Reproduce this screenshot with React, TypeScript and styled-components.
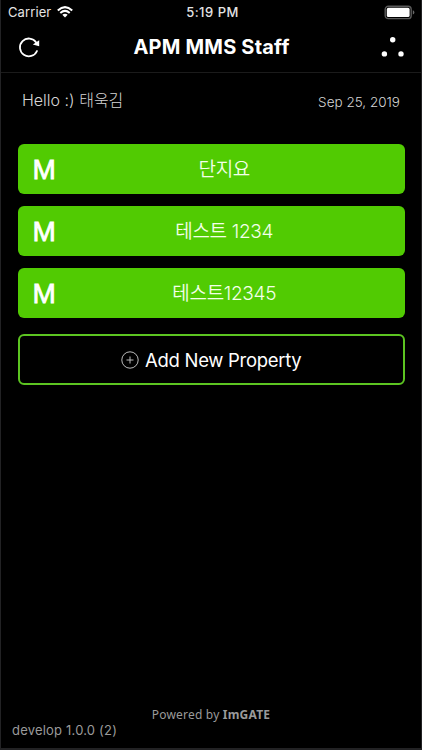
import React from "react";
import styled, { createGlobalStyle } from "styled-components";

const GlobalStyle = createGlobalStyle`
  * { box-sizing: border-box; }
  body { margin: 0; background: #000; }
`;

const Screen = styled.main`
  width: 422px;
  height: 750px;
  display: flex;
  flex-direction: column;
  background: #000;
  color: #fff;
  border: solid #222224;
  border-width: 0 1px 2px;
  font-family: Inter, "Noto Sans CJK KR", sans-serif;
  white-space: nowrap;
  overflow: hidden;
`;

const StatusBar = styled.div`
  height: 24px;
  padding: 0 6px 0 7px;
  display: grid;
  grid-template-columns: 1fr auto 1fr;
  align-items: center;
  font-size: 13px;
  line-height: 24px;
  color: #e4e4e4;
`;

const Carrier = styled.div`
  display: flex;
  align-items: center;
  gap: 6px;
  letter-spacing: 0.1px;
`;

const Clock = styled.div`
  font-weight: 500;
  letter-spacing: 0.5px;
  padding-left: 2px;
`;

const BatterySlot = styled.div`
  display: flex;
  justify-content: flex-end;
`;

const NavBar = styled.header`
  height: 49px;
  padding: 0 16px 2px 17px;
  display: grid;
  grid-template-columns: 24px 1fr 24px;
  align-items: center;
  border-bottom: 1px solid #1b1b1b;
`;

const Title = styled.h1`
  margin: 0;
  text-align: center;
  font-size: 20px;
  line-height: 24px;
  font-weight: 700;
  letter-spacing: 0.2px;
`;

const Greeting = styled.section`
  height: 71px;
  padding: 15px 21px 0;
  display: flex;
  justify-content: space-between;
  color: #d6d6d6;
  font-weight: 300;
  line-height: 24px;
`;

const Hello = styled.span`
  font-size: 16px;
`;

const DateText = styled.span`
  font-size: 13.5px;
  padding-top: 2px;
`;

const Properties = styled.section`
  padding: 0 16px 0 16.5px;
  display: flex;
  flex-direction: column;
  gap: 11.6px;
`;

const PropertyButton = styled.button`
  height: 50.3px;
  padding: 0 16px;
  display: grid;
  grid-template-columns: 26px 1fr 0;
  align-items: center;
  border: 0;
  border-radius: 6px;
  background: #51cb02;
  color: #f3ffe9;
  font: inherit;
`;

const Mark = styled.span`
  justify-self: start;
  margin-left: -1px;
  padding-top: 2px;
  color: #fff;
  font-family: "Liberation Sans", sans-serif;
  font-size: 28px;
  line-height: 48px;
  -webkit-text-stroke: 0.8px #fff;
`;

const Name = styled.span`
  padding-top: 2px;
  text-align: center;
  font-size: 19px;
  line-height: 48px;
  font-weight: 350;
  letter-spacing: -0.3px;
`;

const AddButton = styled.button`
  height: 51px;
  margin-top: 4.7px;
  padding: 0;
  display: flex;
  align-items: center;
  justify-content: center;
  gap: 6px;
  border: 2px solid #5cc421;
  border-radius: 6px;
  background: #000;
  color: #fff;
  font: inherit;
  font-size: 18.5px;
  letter-spacing: -0.3px;
`;

const Footer = styled.footer`
  margin-top: auto;
  display: flex;
  flex-direction: column;
  color: #9a9a9a;
`;

const Powered = styled.p`
  margin: 0;
  text-align: center;
  font-family: "Noto Sans", sans-serif;
  font-size: 12px;
  line-height: 16px;
  letter-spacing: 0.2px;
`;

const Version = styled.p`
  margin: 0;
  padding: 0 0 11px 11px;
  font-size: 13px;
  line-height: 14px;
  letter-spacing: 0.2px;
`;

const WifiIcon = () => (
  <svg width="16" height="12" viewBox="0 0 16 12" fill="none" stroke="#fff" strokeWidth="2">
    <path d="M.8 4.4Q8-2.2 15.2 4.4M3.3 7Q8 2.8 12.7 7" />
    <path d="M5.3 8.8Q8 6.6 10.7 8.8L8 11.6Z" fill="#fff" stroke="none" />
  </svg>
);

const BatteryIcon = () => (
  <svg width="31" height="15" viewBox="0 0 31 15">
    <rect x="1.2" y="1.2" width="26" height="12.4" rx="3.2" fill="none" stroke="#5b5b5b" strokeWidth="1.4" />
    <rect x="2.8" y="2.8" width="22.8" height="9.2" rx="1.6" fill="#fff" />
    <path d="M28.8 5.2Q30.4 5.8 30.4 7.4T28.8 9.6Z" fill="#686868" />
  </svg>
);

const RefreshIcon = () => (
  <svg width="24" height="24" viewBox="0 0 24 24" fill="none">
    <path d="M19 16A8.9 8.9 0 1 1 18.2 7.4" stroke="#fff" strokeWidth="1.8" strokeLinecap="round" />
    <path d="M21.2 5.2V11.2L14.8 9.4Z" fill="#fff" />
  </svg>
);

const DotsIcon = () => (
  <svg width="24" height="24" viewBox="0 0 24 24" fill="#fff">
    <circle cx="11.7" cy="4.8" r="2.7" />
    <circle cx="3.4" cy="18.9" r="2.7" />
    <circle cx="20" cy="18.9" r="2.7" />
  </svg>
);

const PlusIcon = () => (
  <svg width="18" height="18" viewBox="0 0 18 18" fill="none" stroke="#bbb">
    <circle cx="9" cy="9" r="8.2" />
    <path d="M9 5.5V12.5M5.5 9H12.5" />
  </svg>
);

const properties = ["단지요", "테스트 1234", "테스트12345"];

export default function App() {
  return (
    <Screen>
      <GlobalStyle />
      <StatusBar>
        <Carrier>Carrier <WifiIcon /></Carrier>
        <Clock>5:19 PM</Clock>
        <BatterySlot><BatteryIcon /></BatterySlot>
      </StatusBar>
      <NavBar>
        <RefreshIcon />
        <Title>APM MMS Staff</Title>
        <DotsIcon />
      </NavBar>
      <Greeting>
        <Hello>Hello :) 태욱김</Hello>
        <DateText>Sep 25, 2019</DateText>
      </Greeting>
      <Properties>
        {properties.map((name) => (
          <PropertyButton key={name}>
            <Mark>M</Mark>
            <Name>{name}</Name>
          </PropertyButton>
        ))}
        <AddButton><PlusIcon />Add New Property</AddButton>
      </Properties>
      <Footer>
        <Powered>Powered by <b>ImGATE</b></Powered>
        <Version>develop 1.0.0 (2)</Version>
      </Footer>
    </Screen>
  );
}
